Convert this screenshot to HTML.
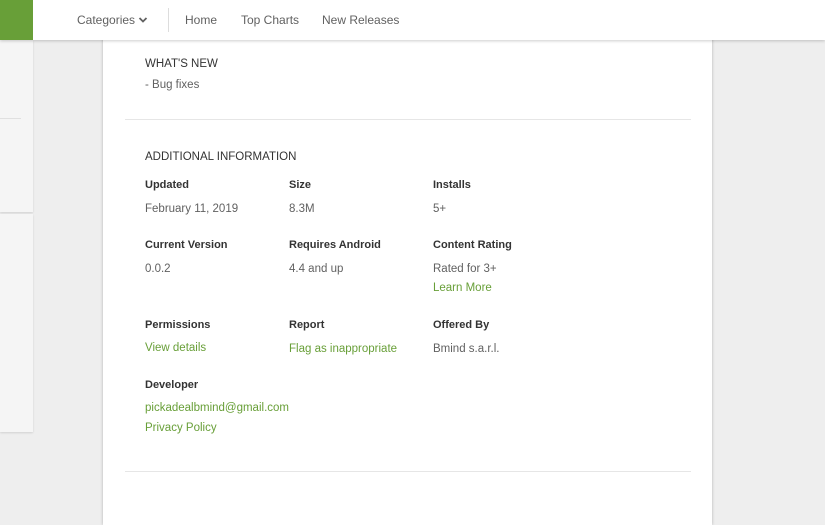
<!DOCTYPE html>
<html style="width:825px;height:525px;overflow:hidden"><head><style>
*{margin:0;padding:0;box-sizing:border-box}
body{width:825px;height:525px;overflow:hidden;background:#eeeeee;font-family:"Liberation Sans",Roboto,sans-serif;position:relative;font-size:12px;color:#333}
.nav{position:absolute;left:0;top:0;width:825px;height:40px;background:#fff;box-shadow:0 1px 3px rgba(0,0,0,.2);z-index:3}
.green{position:absolute;left:0;top:0;width:33px;height:40px;background:#689f38}
.nav span{position:absolute;top:13px;font-size:12px;color:#616161}
.sep{position:absolute;left:168px;top:8px;width:1px;height:24px;background:#ddd}
.lp{position:absolute;left:0;width:33px;background:#f5f5f5;box-shadow:0 1px 2px rgba(0,0,0,.12)}
.card{position:absolute;left:103px;top:30px;width:609px;height:495px;background:#fff;box-shadow:0 0 3px rgba(0,0,0,.25)}
.t{position:absolute;white-space:nowrap}
.h{font-size:11.5px;color:#333;margin-top:2px}
.b{font-weight:bold;font-size:11px;color:#333;margin-top:1px}
.v{font-size:11.5px;color:#616161;margin-top:2px}
.g{font-size:11.5px;color:#689f38;margin-top:2px}
.hr{position:absolute;left:22px;width:566px;height:1px;background:#e6e6e6}
</style></head><body>
<div class="lp" style="top:40px;height:172px"><div style="position:absolute;left:0;top:78px;width:21px;height:1px;background:#e0e0e0"></div></div>
<div class="lp" style="top:214px;height:218px"></div>
<div class="card">
<div class="t h" style="left:42px;top:26px">WHAT'S NEW</div>
<div class="t v" style="left:42px;top:47px">- Bug fixes</div>
<div class="hr" style="top:89px"></div>
<div class="t h" style="left:42px;top:119px">ADDITIONAL INFORMATION</div>
<div class="t b" style="left:42px;top:148px">Updated</div>
<div class="t b" style="left:186px;top:148px">Size</div>
<div class="t b" style="left:330px;top:148px">Installs</div>
<div class="t v" style="left:42px;top:171px">February 11, 2019</div>
<div class="t v" style="left:186px;top:171px">8.3M</div>
<div class="t v" style="left:330px;top:171px">5+</div>
<div class="t b" style="left:42px;top:208px">Current Version</div>
<div class="t b" style="left:186px;top:208px">Requires Android</div>
<div class="t b" style="left:330px;top:208px">Content Rating</div>
<div class="t v" style="left:42px;top:231px">0.0.2</div>
<div class="t v" style="left:186px;top:231px">4.4 and up</div>
<div class="t v" style="left:330px;top:231px">Rated for 3+</div>
<div class="t g" style="left:330px;top:250px">Learn More</div>
<div class="t b" style="left:42px;top:288px">Permissions</div>
<div class="t b" style="left:186px;top:288px">Report</div>
<div class="t b" style="left:330px;top:288px">Offered By</div>
<div class="t g" style="left:42px;top:310px">View details</div>
<div class="t g" style="left:186px;top:311px">Flag as inappropriate</div>
<div class="t v" style="left:330px;top:311px">Bmind s.a.r.l.</div>
<div class="t b" style="left:42px;top:348px">Developer</div>
<div class="t g" style="left:42px;top:370px">pickadealbmind@gmail.com</div>
<div class="t g" style="left:42px;top:390px">Privacy Policy</div>
<div class="hr" style="top:441px"></div>
</div>
<div class="nav"><div class="green"></div>
<span style="left:77px">Categories</span>
<svg style="position:absolute;left:138px;top:16px" width="10" height="8" viewBox="0 0 10 8"><path d="M1.5 2l3.5 3.5L8.5 2" stroke="#616161" stroke-width="1.8" fill="none"/></svg>
<div class="sep"></div>
<span style="left:185px">Home</span>
<span style="left:241px">Top Charts</span>
<span style="left:322px">New Releases</span>
</div>
</body></html>
